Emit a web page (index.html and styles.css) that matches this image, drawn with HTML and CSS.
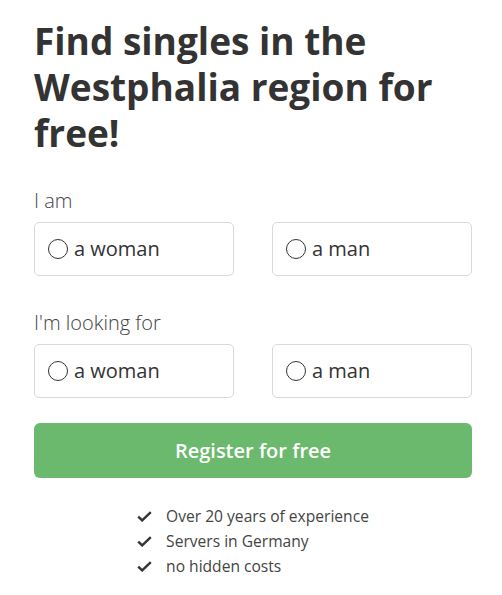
FILE: index.html
```html
<!DOCTYPE html>
<html lang="en">
<head>
<meta charset="utf-8">
<title>Find singles</title>
<link rel="stylesheet" href="styles.css">
</head>
<body>
<main class="page">
  <h1 class="title">Find singles in the Westphalia region for free!</h1>
  <form class="form">
    <div class="group">
      <div class="label">I am</div>
      <div class="choices">
        <label class="choice"><span class="radio"></span><span class="choice-text">a woman</span></label>
        <label class="choice"><span class="radio"></span><span class="choice-text">a man</span></label>
      </div>
    </div>
    <div class="group">
      <div class="label">I'm looking for</div>
      <div class="choices">
        <label class="choice"><span class="radio"></span><span class="choice-text">a woman</span></label>
        <label class="choice"><span class="radio"></span><span class="choice-text">a man</span></label>
      </div>
    </div>
    <button type="button" class="register">Register for free</button>
  </form>
  <div class="benefits-wrap">
    <ul class="benefits">
      <li class="benefit"><svg class="check" viewBox="0 0 15 11" width="15" height="11"><path d="M1.2 5.6 L5.2 9.4 L13.8 1.2" fill="none" stroke="#333" stroke-width="2.4"/></svg><span>Over 20 years of experience</span></li>
      <li class="benefit"><svg class="check" viewBox="0 0 15 11" width="15" height="11"><path d="M1.2 5.6 L5.2 9.4 L13.8 1.2" fill="none" stroke="#333" stroke-width="2.4"/></svg><span>Servers in Germany</span></li>
      <li class="benefit"><svg class="check" viewBox="0 0 15 11" width="15" height="11"><path d="M1.2 5.6 L5.2 9.4 L13.8 1.2" fill="none" stroke="#333" stroke-width="2.4"/></svg><span>no hidden costs</span></li>
    </ul>
  </div>
</main>
</body>
</html>
```

FILE: styles.css
```css
* { box-sizing: border-box; }
html, body { margin: 0; padding: 0; background: #fff; }
body { font-family: "Open Sans", "Liberation Sans", sans-serif; color: #333; }
.page { width: 438px; margin-left: 34px; padding-top: 18px; }
.title { margin: 0; font-size: 37px; line-height: 46px; font-weight: 700; color: #333; }
.form { margin-top: 30px; display: flex; flex-direction: column; }
.group { display: flex; flex-direction: column; gap: 6px; margin-bottom: 32px; }
.group + .group { margin-bottom: 25px; }
.label { font-size: 20px; line-height: 30px; font-weight: 300; color: #444; }
.choices { display: flex; gap: 38px; }
.choice { flex: 1; height: 54px; border: 1px solid #d9d9d9; border-radius: 5px; display: flex; align-items: center; padding-left: 13px; gap: 6px; }
.radio { width: 20px; height: 20px; border: 1.3px solid #333; border-radius: 50%; flex: none; }
.choice-text { font-size: 20px; color: #333; line-height: 1; }
.register { height: 55px; border: 0; border-radius: 6px; background: #6ab96d; color: #fff; font-family: "Open Sans", "Liberation Sans", sans-serif; font-size: 20px; font-weight: 600; cursor: pointer; }
.benefits-wrap { display: flex; justify-content: center; margin-top: 26px; }
.benefits { list-style: none; margin: 0; padding: 0; }
.benefit { display: flex; align-items: center; gap: 14px; font-size: 15.6px; line-height: 25px; color: #444; }
.check { flex: none; }
```
